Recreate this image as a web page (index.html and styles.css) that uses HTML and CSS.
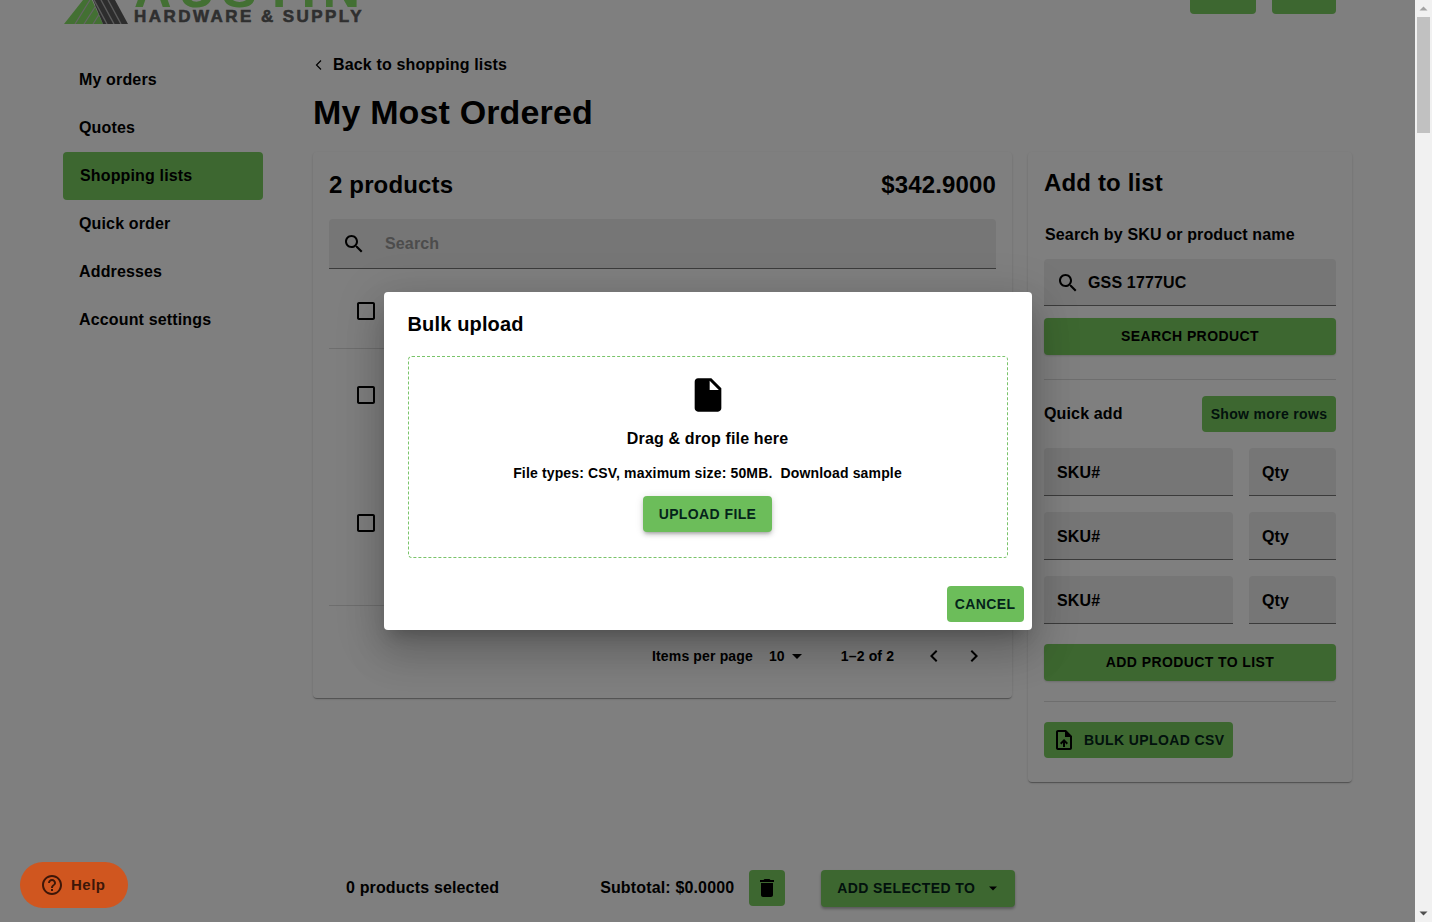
FILE: index.html
```html
<!DOCTYPE html>
<html lang="en">
<head>
    <meta charset="UTF-8">
    <title>My Most Ordered</title>
    <link rel="stylesheet" href="styles.css">
</head>
<body>
<div class="app">
    <div class="viewport">

        <!-- header, scrolled partly out of view -->
        <header class="top">
            <div class="logo">
                <svg class="logo-mark" width="70" height="24" viewBox="0 0 70 24">
                    <path fill="#86e066" d="M0 24 19 0h9l11 24z"/>
                    <path fill="none" stroke="#c8c8c8" stroke-width="1.2" d="M11 24 26 0M20 24 33 4M29 24 36 13"/>
                    <path fill="#5a5a5a" d="M29 0h22l13 24h-25z"/>
                    <path fill="none" stroke="#b4b4b4" stroke-width="1.4" d="M30 0l13 24M37 0l13 24M44 0l13 24"/>
                </svg>
                <div class="logo-words">
                    <span class="logo-name">AUSTIN</span>
                    <span class="logo-sub">HARDWARE &amp; SUPPLY</span>
                </div>
            </div>
            <div class="top-btns">
                <span class="top-btn top-btn-a"></span>
                <span class="top-btn top-btn-b"></span>
            </div>
        </header>

        <div class="layout">
            <!-- side nav -->
            <nav class="side">
                <a class="side-item">My orders</a>
                <a class="side-item">Quotes</a>
                <a class="side-item active">Shopping lists</a>
                <a class="side-item">Quick order</a>
                <a class="side-item">Addresses</a>
                <a class="side-item">Account settings</a>
            </nav>

            <main class="content">
                <a class="back">
                    <svg class="back-icon" width="12" height="14" viewBox="0 0 12 14"><path fill="none" stroke="#000" stroke-width="1.2" d="M8 2.500 3.500 7 8 11.500"/></svg>
                    Back to shopping lists
                </a>
                <h1 class="title">My Most Ordered</h1>

                <div class="columns">
                    <!-- product list -->
                    <section class="card list-card">
                        <div class="list-head">
                            <span>2 products</span>
                            <span>$342.9000</span>
                        </div>
                        <div class="field list-search">
                            <svg class="search-icon" width="24" height="24" viewBox="0 0 24 24"><path d="M15.5 14h-.79l-.28-.27C15.41 12.59 16 11.11 16 9.5 16 5.91 13.09 3 9.5 3S3 5.91 3 9.5 5.91 16 9.5 16c1.61 0 3.09-.59 4.23-1.57l.27.28v.79l5 4.99L20.49 19l-4.99-5zm-6 0C7.01 14 5 11.99 5 9.5S7.01 5 9.5 5 14 7.01 14 9.5 11.99 14 9.5 14z"/></svg>
                            <span class="placeholder">Search</span>
                        </div>
                        <div class="row row-first">
                            <svg class="check" width="24" height="24" viewBox="0 0 24 24"><path d="M19 5v14H5V5h14m0-2H5c-1.1 0-2 .9-2 2v14c0 1.1.9 2 2 2h14c1.1 0 2-.9 2-2V5c0-1.1-.9-2-2-2z"/></svg>
                        </div>
                        <div class="row row-tall">
                            <svg class="check" width="24" height="24" viewBox="0 0 24 24"><path d="M19 5v14H5V5h14m0-2H5c-1.1 0-2 .9-2 2v14c0 1.1.9 2 2 2h14c1.1 0 2-.9 2-2V5c0-1.1-.9-2-2-2z"/></svg>
                        </div>
                        <div class="row row-tall row-last">
                            <svg class="check" width="24" height="24" viewBox="0 0 24 24"><path d="M19 5v14H5V5h14m0-2H5c-1.1 0-2 .9-2 2v14c0 1.1.9 2 2 2h14c1.1 0 2-.9 2-2V5c0-1.1-.9-2-2-2z"/></svg>
                        </div>
                        <div class="pager">
                            <span class="pager-label">Items per page</span>
                            <span class="pager-size">10
                                <svg width="24" height="24" viewBox="0 0 24 24"><path d="M7 10l5 5 5-5z"/></svg>
                            </span>
                            <span class="pager-range">1–2 of 2</span>
                            <svg class="pager-prev" width="24" height="24" viewBox="0 0 24 24"><path d="M15.41 7.41 14 6l-6 6 6 6 1.41-1.41L10.83 12z"/></svg>
                            <svg class="pager-next" width="24" height="24" viewBox="0 0 24 24"><path d="M10 6 8.59 7.41 13.17 12l-4.58 4.59L10 18l6-6z"/></svg>
                        </div>
                    </section>

                    <!-- add to list -->
                    <aside class="card add-card">
                        <h2 class="add-title">Add to list</h2>
                        <div class="add-label">Search by SKU or product name</div>
                        <div class="field add-search">
                            <svg width="24" height="24" viewBox="0 0 24 24"><path d="M15.5 14h-.79l-.28-.27C15.41 12.59 16 11.11 16 9.5 16 5.91 13.09 3 9.5 3S3 5.91 3 9.5 5.91 16 9.5 16c1.61 0 3.09-.59 4.23-1.57l.27.28v.79l5 4.99L20.49 19l-4.99-5zm-6 0C7.01 14 5 11.99 5 9.5S7.01 5 9.5 5 14 7.01 14 9.5 11.99 14 9.5 14z"/></svg>
                            <span>GSS 1777UC</span>
                        </div>
                        <button class="btn btn-wide btn-search">SEARCH PRODUCT</button>
                        <hr class="rule rule-a">
                        <div class="quick-head">
                            <span>Quick add</span>
                            <button class="btn btn-more">Show more rows</button>
                        </div>
                        <div class="quick-row">
                            <div class="field sku">SKU#</div>
                            <div class="field qty">Qty</div>
                        </div>
                        <div class="quick-row">
                            <div class="field sku">SKU#</div>
                            <div class="field qty">Qty</div>
                        </div>
                        <div class="quick-row">
                            <div class="field sku">SKU#</div>
                            <div class="field qty">Qty</div>
                        </div>
                        <button class="btn btn-wide btn-add">ADD PRODUCT TO LIST</button>
                        <hr class="rule rule-b">
                        <button class="btn btn-bulk">
                            <svg width="24" height="24" viewBox="0 0 24 24"><path d="M14 2H6c-1.1 0-1.99.9-1.99 2L4 20c0 1.1.89 2 1.99 2H18c1.1 0 2-.9 2-2V8l-6-6zm4 18H6V4h7v5h5v11zM8 15.01l1.41 1.41L11 14.84V19h2v-4.16l1.59 1.59L16 15.01 12.01 11z"/></svg>
                            BULK UPLOAD CSV
                        </button>
                    </aside>
                </div>
            </main>
        </div>

        <!-- sticky bar -->
        <footer class="bar">
            <span class="bar-count">0 products selected</span>
            <span class="bar-total">Subtotal: $0.0000</span>
            <button class="btn btn-trash">
                <svg width="24" height="24" viewBox="0 0 24 24"><path d="M6 19c0 1.1.9 2 2 2h8c1.1 0 2-.9 2-2V7H6v12zM19 4h-3.5l-1-1h-5l-1 1H5v2h14V4z"/></svg>
            </button>
            <button class="btn btn-selected">ADD SELECTED TO
                <svg width="24" height="24" viewBox="0 0 24 24"><path d="M8 10.500l4 4 4-4z"/></svg>
            </button>
        </footer>

        <!-- modal -->
        <div class="overlay">
            <div class="modal">
                <h3 class="modal-title">Bulk upload</h3>
                <div class="drop">
                    <svg width="40" height="40" viewBox="0 0 24 24"><path d="M6 2c-1.1 0-1.99.9-1.99 2L4 20c0 1.1.89 2 1.99 2H18c1.1 0 2-.9 2-2V8l-6-6H6zm7 7V3.5L18.5 9H13z"/></svg>
                    <div class="drop-title">Drag &amp; drop file here</div>
                    <div class="drop-note">File types: CSV, maximum size: 50MB.&nbsp; Download sample</div>
                    <button class="btn btn-upload">UPLOAD FILE</button>
                </div>
                <div class="modal-actions">
                    <button class="btn btn-cancel">CANCEL</button>
                </div>
            </div>
        </div>

        <button class="help">
            <svg width="24" height="24" viewBox="0 0 24 24"><path d="M11 18h2v-2h-2v2zm1-16C6.48 2 2 6.48 2 12s4.48 10 10 10 10-4.48 10-10S17.52 2 12 2zm0 18c-4.41 0-8-3.59-8-8s3.59-8 8-8 8 3.59 8 8-3.59 8-8 8zm0-14c-2.21 0-4 1.79-4 4h2c0-1.1.9-2 2-2s2 .9 2 2c0 2-3 1.75-3 5h2c0-2.25 3-2.5 3-5 0-2.21-1.79-4-4-4z"/></svg>
            Help
        </button>
    </div>

    <!-- scrollbar -->
    <div class="scrollbar">
        <svg class="sb-arrow" width="17" height="17" viewBox="0 0 17 17"><path fill="#a3a3a3" d="M4.5 10.5 8.500 6.500l4 4z"/></svg>
        <div class="sb-track"><div class="sb-thumb"></div></div>
        <svg class="sb-arrow" width="17" height="17" viewBox="0 0 17 17"><path fill="#505050" d="M4.500 6.500h8l-4 4z"/></svg>
    </div>
</div>
</body>
</html>
```

FILE: styles.css
```css
/* page */
* {
    box-sizing: border-box;
}
body {
    margin: 0;
    background: #fff;
    color: #000;
    font-family: "Liberation Sans", Arial, sans-serif;
    font-weight: 700;
    letter-spacing: .15px;
    overflow: hidden;
}
svg {
    display: block;
    flex: none;
}
.app {
    display: flex;
    height: 922px;
}
.viewport {
    flex: 1;
    display: flex;
    flex-direction: column;
    position: relative;
    overflow: hidden;
}

/* header, clipped at the top of the window */
.top {
    height: 24px;
    flex: none;
    display: flex;
    justify-content: space-between;
    padding: 0 79px 0 64px;
    overflow: hidden;
}
.logo {
    display: flex;
    height: 24px;
}
.logo-words {
    height: 24px;
    display: flex;
    flex-direction: column;
    justify-content: flex-end;
}
.logo-name {
    flex: none;
    height: 38px;
    margin-bottom: 2px;
    font-size: 52px;
    line-height: 38px;
    letter-spacing: 6.5px;
    color: #86e066;
}
.logo-sub {
    flex: none;
    font-size: 17px;
    line-height: 14px;
    letter-spacing: 2.45px;
    color: #5f5f5f;
    -webkit-text-stroke: .6px #5f5f5f;
    white-space: nowrap;
}
.top-btns {
    display: flex;
    gap: 16px;
}
.top-btn {
    height: 14px;
    background: #7ace60;
    border-radius: 0 0 4px 4px;
}
.top-btn-a {
    width: 66px;
}
.top-btn-b {
    width: 64px;
}

/* columns */
.layout {
    display: flex;
    gap: 50px;
    padding: 30px 0 0 63px;
}
.side {
    width: 200px;
    flex: none;
    padding-top: 1px;
    font-size: 16px;
}
.side-item {
    display: flex;
    align-items: center;
    height: 48px;
    padding: 2px 0 0 16px;
}
.side-item.active {
    margin: 1px 0 -1px;
    padding: 0 0 0 17px;
    background: #7ace60;
    border-radius: 4px;
}
.content {
    width: 1039px;
}
.back {
    display: flex;
    align-items: center;
    gap: 8px;
    padding-top: 1px;
    font-size: 16px;
    line-height: 20px;
}
.title {
    margin: 17px 0 20px;
    font-size: 34px;
    line-height: 40px;
}
.columns {
    display: flex;
    align-items: flex-start;
    gap: 16px;
}
.card {
    background: #fff;
    border-radius: 4px;
    box-shadow: 0 2px 1px -1px rgba(0,0,0,.2), 0 1px 1px 0 rgba(0,0,0,.14), 0 1px 3px 0 rgba(0,0,0,.12);
}

/* filled text fields */
.field {
    display: flex;
    align-items: center;
    padding-top: 2px;
    background: #ececec;
    border-bottom: 1px solid #777;
    border-radius: 4px 4px 0 0;
    font-size: 16px;
}

/* product list */
.list-card {
    width: 699px;
    height: 546px;
    padding: 16px;
}
.list-head {
    display: flex;
    justify-content: space-between;
    align-items: center;
    height: 34px;
    font-size: 24px;
}
.list-search {
    height: 50px;
    margin-top: 17px;
    padding-top: 1px;
    padding-left: 13px;
}
.placeholder {
    margin-left: 19px;
    color: #999;
}
.row {
    padding-left: 25px;
}
.row-first {
    height: 80px;
    padding-top: 30px;
    border-bottom: 1px solid #ddd;
}
.row-tall {
    height: 128px;
    padding-top: 34px;
}
.row-last {
    height: 129px;
    border-bottom: 1px solid #ddd;
}
.pager {
    display: flex;
    align-items: center;
    height: 24px;
    margin-top: 38px;
    padding-left: 323px;
    font-size: 14px;
}
.pager-size {
    display: flex;
    align-items: center;
    margin-left: 16px;
}
.pager-range {
    margin-left: 32px;
}
.pager-prev {
    margin-left: 28px;
}
.pager-next {
    margin-left: 16px;
}

/* add to list */
.add-card {
    width: 324px;
    height: 630px;
    padding: 16px;
}
.add-title {
    margin: 0;
    font-size: 24px;
    line-height: 30px;
}
.add-label {
    margin: 26px 0 0 1px;
    font-size: 16px;
    line-height: 22px;
}
.add-search {
    height: 47px;
    margin-top: 13px;
    padding-left: 12px;
    gap: 8px;
}
.btn {
    display: flex;
    align-items: center;
    justify-content: center;
    border: 0;
    padding: 0;
    border-radius: 4px;
    background: #7ace60;
    color: #04241a;
    font-family: inherit;
    font-weight: 700;
    font-size: 14px;
    letter-spacing: .4px;
}
.btn-wide {
    width: 292px;
    height: 37px;
    padding-bottom: 2px;
    color: #000;
    box-shadow: 0 1px 2px rgba(0,0,0,.15);
}
.btn-search {
    margin-top: 12px;
}
.rule {
    margin: 0;
    border: 0;
    border-top: 1px solid #ddd;
}
.rule-a {
    margin-top: 24px;
}
.quick-head {
    display: flex;
    justify-content: space-between;
    align-items: center;
    height: 36px;
    margin-top: 16px;
    margin-bottom: 16px;
    font-size: 16px;
}
.btn-more {
    width: 134px;
    height: 36px;
    letter-spacing: .33px;
}
.quick-row {
    display: flex;
    gap: 16px;
    margin-bottom: 16px;
}
.sku, .qty {
    height: 48px;
    padding-left: 13px;
}
.sku {
    width: 189px;
}
.qty {
    width: 87px;
}
.btn-add {
    margin-top: 20px;
}
.rule-b {
    margin-top: 20px;
}
.btn-bulk {
    justify-content: flex-start;
    width: 189px;
    height: 36px;
    margin-top: 20px;
    padding-left: 8px;
    gap: 8px;
}

/* bottom bar */
.bar {
    margin-top: auto;
    margin-bottom: 15px;
    display: flex;
    align-items: flex-start;
    height: 37px;
    padding-left: 346px;
    font-size: 16px;
    line-height: 36px;
}
.bar-total {
    margin-left: 101px;
}
.btn-trash {
    width: 36px;
    height: 36px;
    margin-left: 15px;
}
.btn-selected {
    justify-content: flex-start;
    width: 194px;
    height: 37px;
    margin-left: 36px;
    padding: 0 0 2px 16px;
    gap: 6px;
    box-shadow: 0 2px 3px rgba(0,0,0,.3);
}

/* modal */
.overlay {
    position: absolute;
    inset: 0;
    display: flex;
    align-items: center;
    justify-content: center;
    background: rgba(0,0,0,.5);
}
.modal {
    width: 648px;
    height: 338px;
    padding: 20px 8px 8px 24px;
    background: #fff;
    border-radius: 4px;
    box-shadow: 0 11px 15px -7px rgba(0,0,0,.2), 0 24px 38px 3px rgba(0,0,0,.14), 0 9px 46px 8px rgba(0,0,0,.12);
}
.modal-title {
    margin: 0;
    font-size: 20px;
    line-height: 24px;
}
.drop {
    display: flex;
    flex-direction: column;
    align-items: center;
    width: 600px;
    height: 202px;
    margin-top: 20px;
    padding-top: 18px;
    border: 1px dashed #7ac46a;
    border-radius: 4px;
}
.drop-title {
    margin-top: 12px;
    font-size: 16px;
    line-height: 24px;
}
.drop-note {
    margin-top: 12px;
    font-size: 14px;
    line-height: 20px;
}
.btn-upload {
    width: 129px;
    height: 36px;
    margin-top: 13px;
    background: #6cbd5a;
    box-shadow: 0 3px 3px -2px rgba(0,0,0,.2), 0 3px 4px rgba(0,0,0,.14), 0 1px 8px rgba(0,0,0,.12);
}
.modal-actions {
    display: flex;
    justify-content: flex-end;
    margin-top: 28px;
}
.btn-cancel {
    width: 77px;
    height: 36px;
    background: #6cbd5a;
}

/* help widget */
.help {
    position: absolute;
    left: 20px;
    bottom: 14px;
    display: flex;
    align-items: center;
    gap: 7px;
    width: 108px;
    height: 46px;
    padding: 0 0 1px 20px;
    border: 0;
    border-radius: 23px;
    background: #d0561f;
    color: #3d1608;
    font-family: inherit;
    font-weight: 700;
    font-size: 15px;
    letter-spacing: .5px;
}
.help svg {
    fill: #3d1608;
}

/* scrollbar */
.scrollbar {
    width: 17px;
    flex: none;
    display: flex;
    flex-direction: column;
    background: #f1f1f1;
}
.sb-track {
    flex: 1;
}
.sb-thumb {
    width: 13px;
    height: 116px;
    margin-left: 2px;
    background: #c1c1c1;
}
```
